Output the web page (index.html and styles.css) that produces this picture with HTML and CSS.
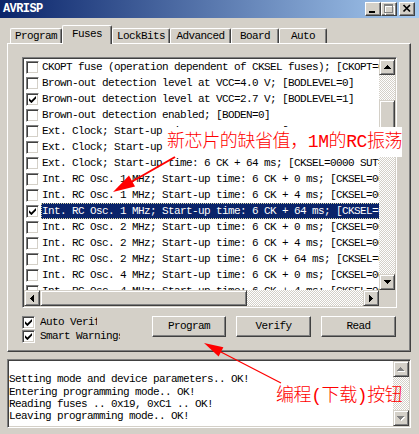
FILE: index.html
```html
<!DOCTYPE html>
<html>
<head>
<meta charset="utf-8">
<title>AVRISP</title>
<link rel="stylesheet" href="styles.css">
</head>
<body>
<div class="window">
  <div class="titlebar">
    <span class="title">AVRISP</span>
    <div class="tbtns">
      <span class="tbtn"><svg width="14" height="12" viewBox="0 0 14 12"><rect x="3" y="8" width="6" height="2" fill="#000"/></svg></span>
      <span class="tbtn"><svg width="14" height="12" viewBox="0 0 14 12" shape-rendering="crispEdges"><path d="M3 3h9v9h-9z" fill="none" stroke="#fff" stroke-width="1"/><path d="M2 1h9v2h-9z M2 3h1v7h-1z M10 3h1v7h-1z M2 9h9v1h-9z" fill="#808080"/></svg></span>
      <span class="tbtn tbtn-close"><svg width="14" height="12" viewBox="0 0 14 12"><path d="M3.5 2 L10 8.5 M10 2 L3.5 8.5" stroke="#000" stroke-width="1.7" fill="none"/></svg></span>
    </div>
  </div>

  <div class="tabs">
    <div class="tab t-program">Program</div>
    <div class="tab active t-fuses">Fuses</div>
    <div class="tab t-lock">LockBits</div>
    <div class="tab t-adv">Advanced</div>
    <div class="tab t-board">Board</div>
    <div class="tab t-auto">Auto</div>
  </div>

  <div class="panel">
    <div class="listbox">
      <div class="viewport">
        <div class="row"><span class="ck"></span><span class="rtext">CKOPT fuse (operation dependent of CKSEL fuses); [CKOPT=0]</span></div>
        <div class="row"><span class="ck"></span><span class="rtext">Brown-out detection level at VCC=4.0 V; [BODLEVEL=0]</span></div>
        <div class="row"><span class="ck"><svg width="7" height="7" viewBox="0 0 7 7"><path d="M0 2.2 L2.4 4.6 L7 0 L7 2.6 L2.4 7.2 L0 4.8 Z" fill="#000"/></svg></span><span class="rtext">Brown-out detection level at VCC=2.7 V; [BODLEVEL=1]</span></div>
        <div class="row"><span class="ck"></span><span class="rtext">Brown-out detection enabled; [BODEN=0]</span></div>
        <div class="row"><span class="ck"></span><span class="rtext">Ext. Clock; Start-up time: 6 CK + 0 ms; [CKSEL=0000 SUT=00]</span></div>
        <div class="row"><span class="ck"></span><span class="rtext">Ext. Clock; Start-up time: 6 CK + 4 ms; [CKSEL=0000 SUT=01]</span></div>
        <div class="row"><span class="ck"></span><span class="rtext">Ext. Clock; Start-up time: 6 CK + 64 ms; [CKSEL=0000 SUT=10]</span></div>
        <div class="row"><span class="ck"></span><span class="rtext">Int. RC Osc. 1 MHz; Start-up time: 6 CK + 0 ms; [CKSEL=0001 SUT=00]</span></div>
        <div class="row"><span class="ck"></span><span class="rtext">Int. RC Osc. 1 MHz; Start-up time: 6 CK + 4 ms; [CKSEL=0001 SUT=01]</span></div>
        <div class="row sel"><span class="ck"><svg width="7" height="7" viewBox="0 0 7 7"><path d="M0 2.2 L2.4 4.6 L7 0 L7 2.6 L2.4 7.2 L0 4.8 Z" fill="#000"/></svg></span><span class="rtext">Int. RC Osc. 1 MHz; Start-up time: 6 CK + 64 ms; [CKSEL=0001 SUT=10]</span></div>
        <div class="row"><span class="ck"></span><span class="rtext">Int. RC Osc. 2 MHz; Start-up time: 6 CK + 0 ms; [CKSEL=0010 SUT=00]</span></div>
        <div class="row"><span class="ck"></span><span class="rtext">Int. RC Osc. 2 MHz; Start-up time: 6 CK + 4 ms; [CKSEL=0010 SUT=01]</span></div>
        <div class="row"><span class="ck"></span><span class="rtext">Int. RC Osc. 2 MHz; Start-up time: 6 CK + 64 ms; [CKSEL=0010 SUT=10]</span></div>
        <div class="row"><span class="ck"></span><span class="rtext">Int. RC Osc. 4 MHz; Start-up time: 6 CK + 0 ms; [CKSEL=0011 SUT=00]</span></div>
        <div class="row"><span class="ck"></span><span class="rtext">Int. RC Osc. 4 MHz; Start-up time: 6 CK + 4 ms; [CKSEL=0011 SUT=01]</span></div>
      </div>
      <div class="vscroll">
        <span class="sbtn"><svg width="7" height="4" viewBox="0 0 7 4" shape-rendering="crispEdges"><path d="M3 0h1v1h-1z M2 1h3v1h-3z M1 2h5v1h-5z M0 3h7v1h-7z" fill="#000"/></svg></span>
        <span class="track vtrack-top"></span>
        <span class="thumb vthumb"></span>
        <span class="track grow"></span>
        <span class="sbtn"><svg width="7" height="4" viewBox="0 0 7 4" shape-rendering="crispEdges"><path d="M0 0h7v1h-7z M1 1h5v1h-5z M2 2h3v1h-3z M3 3h1v1h-1z" fill="#000"/></svg></span>
      </div>
      <div class="hscroll">
        <span class="sbtn"><svg width="4" height="7" viewBox="0 0 4 7" shape-rendering="crispEdges"><path d="M0 3h1v1h-1z M1 2h1v3h-1z M2 1h1v5h-1z M3 0h1v7h-1z" fill="#000"/></svg></span>
        <span class="thumb hthumb"></span>
        <span class="track grow"></span>
        <span class="sbtn"><svg width="4" height="7" viewBox="0 0 4 7" shape-rendering="crispEdges"><path d="M3 3h1v1h-1z M2 2h1v3h-1z M1 1h1v5h-1z M0 0h1v7h-1z" fill="#000"/></svg></span>
      </div>
      <div class="corner"></div>
    </div>

    <div class="controls">
      <div class="opts">
        <div class="opt"><span class="ck"><svg width="7" height="7" viewBox="0 0 7 7"><path d="M0 2.2 L2.4 4.6 L7 0 L7 2.6 L2.4 7.2 L0 4.8 Z" fill="#000"/></svg></span><span class="olbl lbl-auto">Auto Verify</span></div>
        <div class="opt"><span class="ck"><svg width="7" height="7" viewBox="0 0 7 7"><path d="M0 2.2 L2.4 4.6 L7 0 L7 2.6 L2.4 7.2 L0 4.8 Z" fill="#000"/></svg></span><span class="olbl lbl-smart">Smart Warnings</span></div>
      </div>
      <div class="btns">
        <div class="btn btn-prog">Program</div>
        <div class="btn">Verify</div>
        <div class="btn">Read</div>
      </div>
    </div>
  </div>

  <div class="log">
    <div class="logtext">
      <div class="line">&nbsp;</div>
      <div class="line">Setting mode and device parameters.. OK!</div>
      <div class="line">Entering programming mode.. OK!</div>
      <div class="line">Reading fuses .. 0x19, 0xC1 .. OK!</div>
      <div class="line">Leaving programming mode.. OK!</div>
    </div>
    <div class="vscroll">
      <span class="sbtn"><svg width="8" height="5" viewBox="0 0 8 5" shape-rendering="crispEdges"><path d="M4 1h1v1h-1z M3 2h3v1h-3z M2 3h5v1h-5z M1 4h7v1h-7z" fill="#fff"/><path d="M3 0h1v1h-1z M2 1h3v1h-3z M1 2h5v1h-5z M0 3h7v1h-7z" fill="#808080"/></svg></span>
      <span class="track grow"></span>
      <span class="sbtn"><svg width="8" height="5" viewBox="0 0 8 5" shape-rendering="crispEdges"><path d="M1 1h7v1h-7z M2 2h5v1h-5z M3 3h3v1h-3z M4 4h1v1h-1z" fill="#fff"/><path d="M0 0h7v1h-7z M1 1h5v1h-5z M2 2h3v1h-3z M3 3h1v1h-1z" fill="#808080"/></svg></span>
    </div>
  </div>

  <div class="note note1">新芯片的缺省值，1M的RC振荡</div>
  <div class="note note2">编程(下载)按钮</div>
  <svg class="arrows" width="419" height="434" viewBox="0 0 419 434">
    <line x1="175" y1="157" x2="126" y2="185" stroke="#f00" stroke-width="2"/>
    <polygon points="113,192 135,186.5 129,175.5" fill="#f00"/>
    <line x1="281" y1="383" x2="219" y2="351" stroke="#f00" stroke-width="1.2"/>
    <polygon points="204,343 218.6,356.4 223.4,347.2" fill="#f00"/>
  </svg>
</div>
</body>
</html>
```

FILE: styles.css
```css
* { box-sizing: border-box; }
html, body { margin: 0; padding: 0; }
body {
  width: 419px;
  height: 434px;
  overflow: hidden;
  background: #D4D0C8;
  font-family: "Liberation Mono", monospace;
  font-size: 11px;
  letter-spacing: -0.6px;
  color: #000;
}
.window {
  position: relative;
  width: 419px;
  height: 434px;
  background: #D4D0C8;
  overflow: hidden;
}

/* title bar */
.titlebar {
  height: 18px;
  display: flex;
  align-items: center;
  padding: 0 4px 0 3px;
  background: linear-gradient(to right, #0A246A, #A6CAF0);
}
.title {
  color: #fff;
  font-weight: bold;
  font-size: 12px;
}
.tbtns { margin-left: auto; display: flex; }
.tbtn {
  display: block;
  width: 16px;
  height: 14px;
  border: 1px solid;
  border-color: #fff #404040 #404040 #fff;
  box-shadow: inset -1px -1px #808080;
  background: #D4D0C8;
}
.tbtn svg { display: block; }
.tbtn-close { margin-left: 2px; }

/* tabs */
.tabs {
  display: flex;
  align-items: flex-end;
  height: 18px;
  margin-top: 7px;
  padding-left: 10px;
}
.tab {
  height: 15px;
  border-top: 1px solid #fff;
  border-left: 1px solid #fff;
  border-right: 1px solid #404040;
  box-shadow: inset -1px 0 #808080;
  border-radius: 2px 2px 0 0;
  text-align: center;
  line-height: 14px;
  background: #D4D0C8;
}
.tab.active {
  height: 19px;
  margin-bottom: -1px;
  line-height: 16px;
  position: relative;
  z-index: 1;
}
.t-program { width: 52px; }
.t-fuses { width: 50px; }
.t-lock { width: 58px; }
.t-adv { width: 61px; }
.t-board { width: 48px; }
.t-auto { width: 48px; }

/* panel */
.panel {
  margin-left: 7px;
  width: 404px;
  height: 309px;
  border-top: 1px solid #fff;
  border-left: 1px solid #fff;
  border-right: 1px solid #404040;
  border-bottom: 1px solid #404040;
  box-shadow: inset -1px -1px #808080;
  padding: 13px 0 0 14px;
}

/* checkbox */
.ck {
  width: 13px;
  height: 13px;
  flex-shrink: 0;
  border: 1px solid;
  border-color: #808080 #fff #fff #808080;
  box-shadow: inset 1px 1px #404040, inset -1px -1px #D4D0C8;
  background: #fff;
  display: flex;
  align-items: center;
  justify-content: center;
}
.ck svg { display: block; }

/* list box */
.listbox {
  width: 375px;
  height: 251px;
  border: 1px solid;
  border-color: #808080 #fff #fff #808080;
  box-shadow: inset 1px 1px #404040, inset -1px -1px #D4D0C8;
  padding: 1px;
  background: #fff;
  display: grid;
  grid-template-columns: 1fr 16px;
  grid-template-rows: 1fr 16px;
}
.viewport {
  overflow: hidden;
  min-width: 0;
  min-height: 0;
  background: #fff;
}
.row {
  height: 16px;
  display: flex;
  align-items: center;
  padding-left: 2px;
  white-space: nowrap;
}
.rtext {
  flex-shrink: 0;
  height: 16px;
  line-height: 16px;
  margin-left: 2px;
  padding: 0 2px 0 1px;
}
.row.sel .rtext {
  background: #0A246A;
  color: #fff;
  outline: 1px dotted #d8d4a0;
  outline-offset: -1px;
}

/* scrollbars */
.vscroll { display: flex; flex-direction: column; }
.hscroll { display: flex; flex-direction: row; }
.sbtn {
  width: 16px;
  height: 16px;
  flex-shrink: 0;
  border: 1px solid;
  border-color: #D4D0C8 #404040 #404040 #D4D0C8;
  box-shadow: inset 1px 1px #fff, inset -1px -1px #808080;
  background: #D4D0C8;
  display: flex;
  align-items: center;
  justify-content: center;
}
.sbtn svg { display: block; }
.thumb {
  flex-shrink: 0;
  border: 1px solid;
  border-color: #D4D0C8 #404040 #404040 #D4D0C8;
  box-shadow: inset 1px 1px #fff, inset -1px -1px #808080;
  background: #D4D0C8;
}
.vthumb { height: 30px; }
.hthumb { width: 207px; }
.track {
  background: repeating-conic-gradient(#fff 0 25%, #D4D0C8 0 50%) 0 0 / 2px 2px;
}
.vtrack-top { height: 25px; flex-shrink: 0; }
.grow { flex: 1; }
.corner { background: #D4D0C8; }

/* controls */
.controls {
  display: flex;
  margin-top: 7px;
  height: 28px;
}
.opts {
  width: 130px;
  display: flex;
  flex-direction: column;
}
.opt {
  height: 14px;
  display: flex;
  align-items: center;
}
.olbl {
  margin-left: 5px;
  white-space: nowrap;
  overflow: hidden;
  line-height: 14px;
}
.lbl-auto { width: 57px; }
.lbl-smart { width: 80px; }
.btns {
  display: flex;
  gap: 10px;
  margin-top: 1px;
}
.btn {
  width: 75px;
  height: 21px;
  border: 1px solid;
  border-color: #fff #404040 #404040 #fff;
  box-shadow: inset -1px -1px #808080;
  background: #D4D0C8;
  text-align: center;
  line-height: 18px;
}
.btn-prog { width: 74px; }

/* log */
.log {
  margin: 7px 0 0 7px;
  width: 404px;
  height: 69px;
  border: 1px solid;
  border-color: #808080 #fff #fff #808080;
  box-shadow: inset 1px 1px #404040, inset -1px -1px #D4D0C8;
  padding: 1px;
  background: #fff;
  display: flex;
}
.logtext {
  flex: 1;
  overflow: hidden;
  line-height: 12.33px;
  white-space: nowrap;
  background: #fff;
}
.log .vscroll { width: 16px; flex-shrink: 0; }

/* annotations */
.note {
  position: absolute;
  color: #f00;
  font-family: "Liberation Mono", "Noto Sans CJK SC", sans-serif;
  font-size: 18px;
  font-weight: 300;
  letter-spacing: -0.4px;
  white-space: nowrap;
}
.note1 {
  left: 163px;
  top: 127px;
  width: 239px;
  height: 30px;
  line-height: 30px;
  padding-left: 4px;
  background: #fff;
}
.note2 {
  left: 276px;
  top: 387px;
  line-height: 18px;
}
.arrows {
  position: absolute;
  left: 0;
  top: 0;
  pointer-events: none;
}
```
